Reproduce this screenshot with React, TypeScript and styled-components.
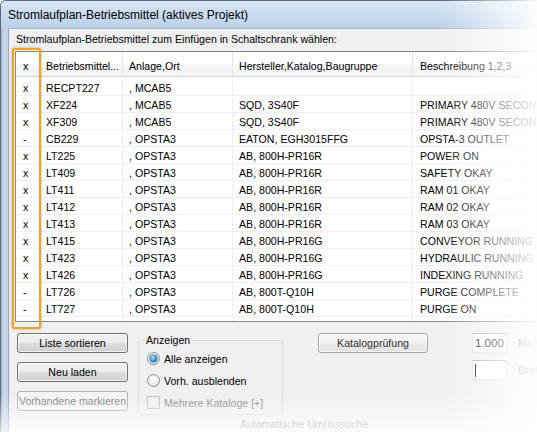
import styled, { createGlobalStyle } from "styled-components";

const GlobalStyle = createGlobalStyle`
  html, body {
    margin: 0;
    padding: 0;
    width: 537px;
    height: 432px;
    overflow: hidden;
    background: #fff;
  }
  body {
    font-family: "Liberation Sans", Arial, sans-serif;
    font-size: 10.6px;
    color: #000;
  }
`;

const Window = styled.div`
  width: 600px;
  height: 432px;
  display: flex;
  flex-direction: column;
  box-sizing: border-box;
  border-top: 1px solid #5b6879;
  border-left: 1px solid #5b6879;
  border-top-left-radius: 6px;
  overflow: hidden;
  background: #c3d5ea;
`;

const TitleBar = styled.div`
  height: 27px;
  flex: none;
  display: flex;
  align-items: center;
  padding-left: 7px;
  font-size: 12px;
  background: linear-gradient(#d7e5f4, #bcd1e9);
`;

const Main = styled.div`
  flex: 1;
  display: flex;
  min-height: 0;
`;

const FrameEdge = styled.div`
  width: 7px;
  flex: none;
  background: linear-gradient(to right, #a7b9ce, #c9d8ea 40%, #c2d3e7);
`;

const Client = styled.div`
  flex: 1;
  display: flex;
  flex-direction: column;
  border-left: 1px solid #97a6b8;
  border-top: 1px solid #a9b8ca;
  background: #f0f0f0;
  padding-left: 6px;
`;

const Caption = styled.div`
  height: 13px;
  line-height: 13px;
  margin-top: 4px;
  padding-left: 1px;
  white-space: nowrap;
`;

const ListWrap = styled.div`
  position: relative;
  margin-top: 5px;
  width: 560px;
`;

const List = styled.div`
  height: 271px;
  box-sizing: border-box;
  border: 1px solid #828790;
  background: #fff;
  display: flex;
  flex-direction: column;
  overflow: hidden;
`;

const Grid = styled.div`
  display: grid;
  grid-template-columns: 24px 83px 110px 180px 1fr;
`;

const Header = styled(Grid)`
  height: 25px;
  flex: none;
  box-sizing: border-box;
  border-bottom: 1px solid #d5d5d5;
  background: linear-gradient(#ffffff 0%, #ffffff 50%, #f6f7f9 50%, #f3f4f6 100%);
`;

const HeadCell = styled.div`
  display: flex;
  align-items: center;
  padding: 3px 6px 0;
  border-right: 1px solid #e3e5e8;
  white-space: nowrap;
  overflow: hidden;
  &:first-child,
  &:last-child {
    padding-left: 7px;
  }
`;

const Body = styled.div`
  flex: 1;
  display: flex;
  flex-direction: column;
  padding-top: 2px;
`;

const Row = styled(Grid)`
  height: 17px;
  flex: none;
  box-sizing: border-box;
  border-bottom: 1px solid #f0f0f0;
`;

const Filler = styled(Grid)`
  flex: 1;
`;

const Cell = styled.div`
  display: flex;
  align-items: center;
  padding: 1px 6px 0;
  border-right: 1px solid #f0f0f0;
  white-space: nowrap;
  overflow: hidden;
  &:first-child,
  &:last-child {
    padding-left: 7px;
  }
`;

const Highlight = styled.div`
  position: absolute;
  left: -3px;
  top: -3px;
  width: 29px;
  height: 281px;
  box-sizing: border-box;
  border: 2.5px solid #f6a21d;
  border-radius: 2px;
  box-shadow: 0 0 3px rgba(0, 0, 0, 0.3);
  pointer-events: none;
`;

const Bottom = styled.div`
  display: flex;
  align-items: flex-start;
  margin-top: 11px;
  padding-left: 2px;
`;

const ButtonColumn = styled.div`
  width: 111px;
  display: flex;
  flex-direction: column;
  gap: 9px;
`;

const Button = styled.button<{ $soft?: boolean }>`
  height: 20px;
  width: 100%;
  box-sizing: border-box;
  padding: 0;
  font: inherit;
  color: ${(p) => (p.$soft ? "#333" : "#000")};
  border: 1px solid ${(p) => (p.$soft ? "#a4a4a4" : "#707070")};
  border-radius: 3px;
  background: ${(p) =>
    p.$soft
      ? "linear-gradient(#f6f6f6 0%, #f1f1f1 50%, #e9e9e9 50%, #e3e3e3 100%)"
      : "linear-gradient(#f2f2f2 0%, #ebebeb 50%, #dddddd 50%, #cfcfcf 100%)"};
  box-shadow: inset 0 0 0 1px rgba(255, 255, 255, 0.7);

  &:disabled {
    color: #838383;
    border-color: #adb2b5;
    background: #f4f4f4;
    box-shadow: none;
  }
`;

const GroupBox = styled.fieldset`
  margin: 1px 0 0 10px;
  width: 145px;
  height: 81px;
  box-sizing: border-box;
  padding: 3px 0 0 8px;
  border: 1px solid #d5dfe5;
  border-radius: 3px;
  display: flex;
  flex-direction: column;
  gap: 5px;
`;

const Legend = styled.legend`
  padding: 0 2px;
  margin-left: -3px;
  line-height: 13px;
`;

const Option = styled.label<{ $disabled?: boolean }>`
  height: 17px;
  display: flex;
  align-items: center;
  gap: 4px;
  white-space: nowrap;
  color: ${(p) => (p.$disabled ? "#8d8d8d" : "#000")};
`;

const Radio = styled.span<{ $checked?: boolean }>`
  width: 13px;
  height: 13px;
  flex: none;
  box-sizing: border-box;
  border-radius: 50%;
  border: 1px solid #8e8f8f;
  background: radial-gradient(circle at 50% 40%, #ffffff 0%, #e8e8e8 65%, #cdcdcd 100%);
  display: flex;
  align-items: center;
  justify-content: center;

  &::after {
    content: "";
    display: ${(p) => (p.$checked ? "block" : "none")};
    width: 7px;
    height: 7px;
    border-radius: 50%;
    background: radial-gradient(circle at 40% 35%, #b4e6fd 0%, #3ea3db 45%, #114f85 100%);
    box-shadow: 0 0 0 0.5px #1d4f78;
  }
`;

const CheckBox = styled.span`
  width: 13px;
  height: 13px;
  flex: none;
  box-sizing: border-box;
  border: 1px solid #c5c5c5;
  background: #f4f4f4;
  box-shadow: inset 0 0 0 2px #ececec;
`;

const KatalogColumn = styled.div`
  width: 110px;
  margin-left: 35px;
`;

const FieldColumn = styled.div`
  margin-left: 44px;
  display: flex;
  flex-direction: column;
  gap: 7px;
`;

const FieldRow = styled.div`
  display: flex;
  align-items: center;
  gap: 11px;
  white-space: nowrap;
`;

const TextBox = styled.div`
  width: 35px;
  height: 20px;
  box-sizing: border-box;
  border: 1px solid #dbdfe6;
  border-top-color: #abadb3;
  background: #fff;
  display: flex;
  align-items: center;
  padding-left: 2px;
  font-size: 11.5px;
`;

const Caret = styled.span`
  width: 1px;
  height: 13px;
  background: #000;
`;

const FieldLabel = styled.span`
  color: #6d6d6d;
`;

const SubCaption = styled.div`
  margin: 3px 0 0 225px;
  line-height: 13px;
  color: #9a9a9a;
  white-space: nowrap;
`;

const Fade = styled.div`
  position: fixed;
  inset: 0;
  pointer-events: none;
  background:
    linear-gradient(to right, rgba(255, 255, 255, 0) 440px, rgba(255, 255, 255, 0.93) 537px),
    linear-gradient(to bottom, rgba(255, 255, 255, 0) 395px, rgba(255, 255, 255, 0.75) 432px);
`;

const columns = ["x", "Betriebsmittel...", "Anlage,Ort", "Hersteller,Katalog,Baugruppe", "Beschreibung 1,2,3"];

const rows: string[][] = [
  ["x", "RECPT227", ", MCAB5", "", ""],
  ["x", "XF224", ", MCAB5", "SQD, 3S40F", "PRIMARY 480V SECONDARY 120V"],
  ["x", "XF309", ", MCAB5", "SQD, 3S40F", "PRIMARY 480V SECONDARY 120V"],
  ["-", "CB229", ", OPSTA3", "EATON, EGH3015FFG", "OPSTA-3 OUTLET"],
  ["x", "LT225", ", OPSTA3", "AB, 800H-PR16R", "POWER ON"],
  ["x", "LT409", ", OPSTA3", "AB, 800H-PR16R", "SAFETY OKAY"],
  ["x", "LT411", ", OPSTA3", "AB, 800H-PR16R", "RAM 01 OKAY"],
  ["x", "LT412", ", OPSTA3", "AB, 800H-PR16R", "RAM 02 OKAY"],
  ["x", "LT413", ", OPSTA3", "AB, 800H-PR16R", "RAM 03 OKAY"],
  ["x", "LT415", ", OPSTA3", "AB, 800H-PR16G", "CONVEYOR RUNNING"],
  ["x", "LT423", ", OPSTA3", "AB, 800H-PR16G", "HYDRAULIC RUNNING"],
  ["x", "LT426", ", OPSTA3", "AB, 800H-PR16G", "INDEXING RUNNING"],
  ["-", "LT726", ", OPSTA3", "AB, 800T-Q10H", "PURGE COMPLETE"],
  ["-", "LT727", ", OPSTA3", "AB, 800T-Q10H", "PURGE ON"],
];

const App = () => {
  return (
    <>
      <GlobalStyle />
      <Window>
        <TitleBar>Stromlaufplan-Betriebsmittel (aktives Projekt)</TitleBar>
        <Main>
          <FrameEdge />
          <Client>
            <Caption>Stromlaufplan-Betriebsmittel zum Einfügen in Schaltschrank wählen:</Caption>
            <ListWrap>
              <List>
                <Header>
                  {columns.map((c) => (
                    <HeadCell key={c}>{c}</HeadCell>
                  ))}
                </Header>
                <Body>
                  {rows.map((r) => (
                    <Row key={r[1]}>
                      {r.map((v, i) => (
                        <Cell key={i}>{v}</Cell>
                      ))}
                    </Row>
                  ))}
                  <Filler>
                    {columns.map((c) => (
                      <Cell key={c} />
                    ))}
                  </Filler>
                </Body>
              </List>
              <Highlight />
            </ListWrap>

            <Bottom>
              <ButtonColumn>
                <Button>Liste sortieren</Button>
                <Button>Neu laden</Button>
                <Button disabled>Vorhandene markieren</Button>
              </ButtonColumn>

              <GroupBox>
                <Legend>Anzeigen</Legend>
                <Option>
                  <Radio $checked />
                  Alle anzeigen
                </Option>
                <Option>
                  <Radio />
                  Vorh. ausblenden
                </Option>
                <Option $disabled>
                  <CheckBox />
                  Mehrere Kataloge [+]
                </Option>
              </GroupBox>

              <KatalogColumn>
                <Button $soft>Katalogprüfung</Button>
              </KatalogColumn>

              <FieldColumn>
                <FieldRow>
                  <TextBox>1.000</TextBox>
                  <FieldLabel>Maßstab</FieldLabel>
                </FieldRow>
                <FieldRow>
                  <TextBox>
                    <Caret />
                  </TextBox>
                  <FieldLabel>Drehwinkel</FieldLabel>
                </FieldRow>
              </FieldColumn>
            </Bottom>
            <SubCaption>Automatische Umrisssuche</SubCaption>
          </Client>
        </Main>
      </Window>
      <Fade />
    </>
  );
};

export default App;
